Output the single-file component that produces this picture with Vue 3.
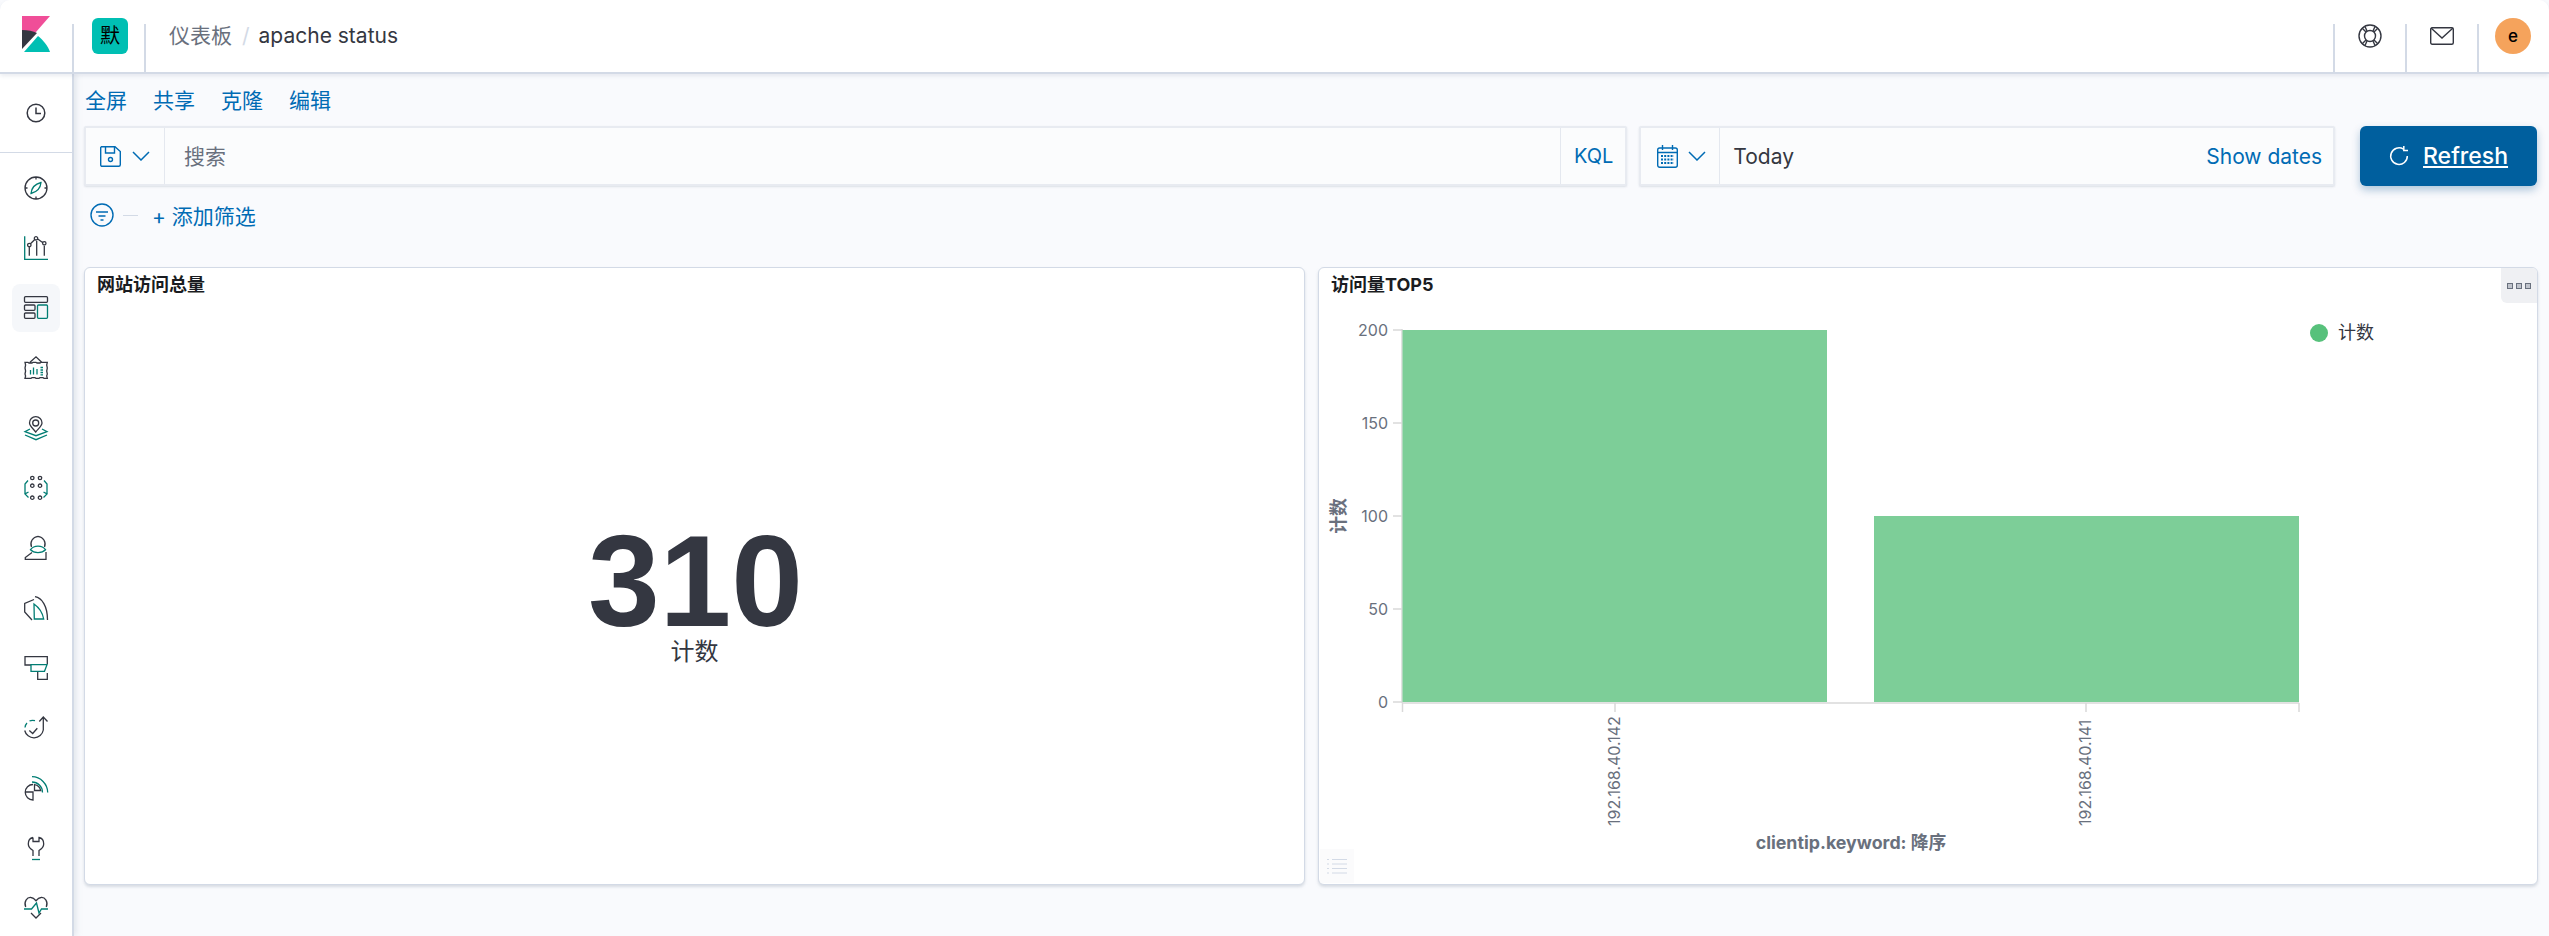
<template>
  <div class="app">
    <header class="top">
      <div class="logo-cell">
        <svg width="28" height="36" viewBox="0 0 28 36">
          <path d="M0 0H28L0 32Z" fill="#f04e98" />
          <path d="M0 14C6 14 11 15 15 17L0 33Z" fill="#343741" />
          <path d="M2 36L16 20C21 24 26 30 28 36Z" fill="#00bfb3" />
        </svg>
      </div>
      <div class="space-cell"><span class="space">默</span></div>
      <nav class="crumbs">
        <span class="crumb-link">仪表板</span>
        <span class="crumb-sep">/</span>
        <span class="crumb-now">apache status</span>
      </nav>
      <div class="top-icon">
        <svg width="24" height="24" viewBox="0 0 24 24" fill="none" stroke="#343741" stroke-width="1.4">
          <circle cx="12" cy="12" r="11" />
          <circle cx="12" cy="12" r="5.5" />
          <path d="M4 4L8 8M20 4L16 8M4 20L8 16M20 20L16 16M7 2.5L9 7M17 2.5L15 7M7 21.5L9 17M17 21.5L15 17" />
        </svg>
      </div>
      <div class="top-icon">
        <svg class="mail" width="24" height="18" viewBox="0 0 24 18" fill="none" stroke="#343741" stroke-width="1.4">
          <rect x="0.7" y="0.7" width="22.6" height="16.6" rx="1.5" />
          <path d="M1 1L12 11L23 1" />
        </svg>
      </div>
      <div class="top-avatar"><span class="avatar">e</span></div>
    </header>

    <div class="body">
      <aside class="side">
        <div class="side-recent">
          <svg width="20" height="20" viewBox="0 0 20 20" fill="none" stroke="#343741" stroke-width="1.5">
            <circle cx="10" cy="10" r="8.8" />
            <path d="M10 4.5V10.5H15" />
          </svg>
        </div>
        <div class="side-list">
          <div v-for="item in navItems" :key="item.name" class="side-item" :class="{ active: item.name === 'dashboard' }">
            <svg width="24" height="24" viewBox="0 0 24 24" fill="none" stroke-width="1.3">
              <path :d="item.dark" stroke="#343741" />
              <path :d="item.teal" stroke="#017d73" />
            </svg>
          </div>
        </div>
      </aside>

      <main class="content">
        <div class="actions">
          <a>全屏</a>
          <a>共享</a>
          <a>克隆</a>
          <a>编辑</a>
        </div>

        <div class="query">
          <div class="field field-search">
            <div class="prepend">
              <svg width="21" height="21" viewBox="0 0 21 21" fill="none" stroke="#006bb4" stroke-width="1.4">
                <path d="M1.5 0.7H15L20.3 5.5V18.8C20.3 19.7 19.7 20.3 18.8 20.3H2.2C1.3 20.3 0.7 19.7 0.7 18.8V1.5Z" />
                <path d="M5.5 1V7H14.5V1" />
                <circle cx="10.5" cy="13.5" r="2" />
              </svg>
              <svg width="18" height="10" viewBox="0 0 18 10" fill="none" stroke="#006bb4" stroke-width="1.5">
                <path d="M1 1L9 9L17 1" />
              </svg>
            </div>
            <div class="search-text">搜索</div>
            <a class="kql">KQL</a>
          </div>

          <div class="field field-date">
            <div class="prepend prepend-date">
              <svg width="21" height="23" viewBox="0 0 21 23" fill="none" stroke="#006bb4" stroke-width="1.4">
                <rect x="0.7" y="3" width="19.6" height="19.3" rx="2" />
                <path d="M1 7.5H20M5.5 0V5M15.5 0V5" />
                <path d="M4 11H17M4 14.5H17M4 18H17" stroke-width="2" stroke-dasharray="2 1.2" />
              </svg>
              <svg width="18" height="10" viewBox="0 0 18 10" fill="none" stroke="#006bb4" stroke-width="1.5">
                <path d="M1 1L9 9L17 1" />
              </svg>
            </div>
            <div class="date-text">Today</div>
            <a class="show-dates">Show dates</a>
          </div>

          <button class="refresh">
            <svg width="20" height="20" viewBox="0 0 20 20" fill="none" stroke="#fff" stroke-width="1.5">
              <path d="M14.5 3.2A8.3 8.3 0 1 0 18.3 10" />
              <path d="M14.8 0V4.4H19" />
            </svg>
            <span>Refresh</span>
          </button>
        </div>

        <div class="filters">
          <svg width="24" height="24" viewBox="0 0 24 24" fill="none" stroke="#006bb4" stroke-width="1.4">
            <circle cx="12" cy="12" r="11" />
            <path d="M6 9H18M8.5 13H15.5M10.5 17H13.5" />
          </svg>
          <span class="filter-dash"></span>
          <a class="add-filter"><span class="plus">+</span> 添加筛选</a>
        </div>

        <div class="panels">
          <section class="panel">
            <h3 class="panel-title">网站访问总量</h3>
            <div class="metric">
              <div class="metric-value">310</div>
              <div class="metric-label">计数</div>
            </div>
          </section>

          <section class="panel">
            <h3 class="panel-title">访问量TOP5</h3>
            <div class="panel-menu">
              <i></i><i></i><i></i>
            </div>
            <svg class="chart" width="1218" height="616" viewBox="0 0 1218 616">
              <g class="grid">
                <path v-for="t in yTicks" :key="t.label" :d="`M74 ${t.y}H83`" />
                <path d="M83 61V435" />
                <path d="M83 435H980" />
                <path v-for="x in xTicks" :key="x" :d="`M${x} 435V444`" />
              </g>
              <rect x="83.5" y="62" width="424.5" height="372" fill="#7dce98" />
              <rect x="555" y="248" width="425" height="186" fill="#7dce98" />
              <text v-for="t in yTicks" :key="t.label" class="tick" x="69" :y="t.y + 6" text-anchor="end">{{ t.label }}</text>
              <text class="tick" transform="translate(301 558) rotate(-90)">192.168.40.142</text>
              <text class="tick" transform="translate(772 558) rotate(-90)">192.168.40.141</text>
              <text class="axis-title" transform="translate(26 248) rotate(-90)" text-anchor="middle">计数</text>
              <text class="axis-title" x="532" y="581" text-anchor="middle">clientip.keyword: 降序</text>
              <circle cx="1000" cy="65" r="9" fill="#57c17b" />
              <text class="legend" x="1019" y="71">计数</text>
            </svg>
            <div class="legend-toggle">
              <svg width="20" height="16" viewBox="0 0 20 16" fill="none" stroke="#d3dae6" stroke-width="1">
                <path d="M0 1.5H2M5 1.5H20M0 6H2M5 6H20M0 10.5H2M5 10.5H20M0 15H2M5 15H20" />
              </svg>
            </div>
          </section>
        </div>
      </main>
    </div>
  </div>
</template>

<script setup>
const dot = (x, y, r = 1.7) => `M${x} ${y - r}A${r} ${r} 0 1 0 ${x} ${y + r}A${r} ${r} 0 1 0 ${x} ${y - r}Z`;

const navItems = [
  {
    name: 'discover',
    dark: 'M12 1A11 11 0 0 1 23 12A11 11 0 0 1 12 23A11 11 0 0 1 1 12A11 11 0 0 1 12 1ZM12 1V3.5M12 20.5V23M1 12H3.5M20.5 12H23',
    teal: 'M17 6.5C16.5 12 13 16 7 17.5C7.5 12 11 8 17 6.5Z',
  },
  {
    name: 'visualize',
    dark: `${dot(5.3, 9)}${dot(12, 2.3)}${dot(20.3, 7.3)}M6.5 7.8L10.8 3.5M13.7 3L18.6 6.6M5.3 11.3V19.7M12.7 5V19.7M20.3 10V19.7`,
    teal: 'M0.7 0.3V23.3H24',
  },
  {
    name: 'dashboard',
    dark: 'M1.5 0.7H22.5A1 1 0 0 1 23.5 1.7V5.3A1 1 0 0 1 22.5 6.3H1.5A1 1 0 0 1 0.5 5.3V1.7A1 1 0 0 1 1.5 0.7ZM1.5 9H10A1 1 0 0 1 11 10V13.3A1 1 0 0 1 10 14.3H1.5A1 1 0 0 1 0.5 13.3V10A1 1 0 0 1 1.5 9ZM1.5 17H10A1 1 0 0 1 11 18V21.3A1 1 0 0 1 10 22.3H1.5A1 1 0 0 1 0.5 21.3V18A1 1 0 0 1 1.5 17Z',
    teal: 'M14.5 9H22.5A1 1 0 0 1 23.5 10V21.3A1 1 0 0 1 22.5 22.3H14.5A1 1 0 0 1 13.5 21.3V10A1 1 0 0 1 14.5 9Z',
  },
  {
    name: 'canvas',
    dark: 'M6 6.3L12 0.8L17.7 6.3M1 6.3H4L5 7H8L9 6.3H12L13 7H16L17 6.3H23.3L22.7 9L23.3 12L22.7 15L23.3 18L22.7 20L23.3 22.3H20L19 21.7H16L15 22.3H12L11 21.7H8L7 22.3H1L1.6 20L1 18L1.6 15L1 12L1.6 9Z',
    teal: 'M6.5 14V18.5M9.5 11.5V18.5M13 13V18.5M16.5 11.5H19M16.5 14H19M16.5 16.5H19M16.5 18.8H19',
  },
  {
    name: 'maps',
    dark: 'M11.7 0.7A6.2 6.2 0 0 0 5.5 7C5.5 10 9 12.5 11.7 16C14.5 12.5 18 10 18 7A6.2 6.2 0 0 0 11.7 0.7ZM11.7 4A3 3 0 1 0 11.7 10A3 3 0 1 0 11.7 4Z',
    teal: 'M6 13L1 15.7L12 19.7L23 15.7L18 13M1 19L12 23.7L23 19',
  },
  {
    name: 'ml',
    dark: `${dot(8.3, 2)}${dot(16, 2)}${dot(8.3, 9.7)}${dot(16, 9.7)}${dot(8.3, 21.7)}${dot(16, 21.7)}`,
    teal: 'M4 4.5L1 8V18M4.5 16L1 18L4.5 21.5M20 4.5L23 8V18M19.5 16L23 18L19.5 21.5',
  },
  {
    name: 'infra',
    dark: 'M7.5 11A7.8 7.8 0 0 1 14 0.3A7.8 7.8 0 0 1 20.5 11M22 16V23.3H1.3V21.5L8 16.5',
    teal: 'M6.5 13.7C10 9 18 9 21.5 13.7C18 17.5 10 17.5 6.5 13.7Z',
  },
  {
    name: 'logs',
    dark: 'M11 0.7C18 2 23.5 10 23.5 24M10 3.5L0.7 7.5V16L8 24',
    teal: 'M10 8C15 11.5 18.5 16.5 19.7 23H10.3Z',
  },
  {
    name: 'apm',
    dark: 'M7 9H1V0.7H23.3V8M13.7 16V23.3H23.3V17',
    teal: 'M7 8.7H23L20.5 15.3H7Z',
  },
  {
    name: 'uptime',
    dark: 'M19.3 1V14A9.5 9.5 0 0 1 0.7 14.5M15.3 5.5L19.3 1L23.5 5.5M5.3 14.5L8.7 17.5L13.3 12.3',
    teal: 'M1 11.5C1.3 9.5 2 8 3 7M5.5 5C7 4.3 9 4.2 11 4.7',
  },
  {
    name: 'siem',
    dark: 'M9 8.5A7.7 7.7 0 1 0 9 24V16H1.3M10.5 8.7A7.7 7.7 0 0 1 16.7 14.5H10.5Z',
    teal: 'M8 0.7A16 16 0 0 1 23.7 16.5M8 6A10.5 10.5 0 0 1 18.5 16.5',
  },
  {
    name: 'devtools',
    dark: 'M9 1.5C6 2 4.3 5 4.3 8C4.3 11 6.5 13 9 14.5V20M15 20V14.5C17.5 13 19.7 11 19.7 8C19.7 5 18 2 15 1.5V5.5H9V1.5',
    teal: 'M8 23.5H16',
  },
  {
    name: 'monitoring',
    dark: 'M1.7 11C-0.5 6 3 1 7 1.5C9 1.7 10.5 3 12 4.7C13.5 3 15 1.7 17 1.5C21 1 24.5 6 22.3 11M7 17L12 22L17 17',
    teal: 'M0 13H7.5L10 10L12.5 7L15 17L17.5 13H24',
  },
];

const yTicks = [
  { label: '200', y: 62 },
  { label: '150', y: 155 },
  { label: '100', y: 248 },
  { label: '50', y: 341 },
  { label: '0', y: 434 },
];

const xTicks = [83.5, 296, 767, 980];
</script>

<style>
html,
body {
  margin: 0;
  padding: 0;
  background: #fff;
  overflow: hidden;
}
</style>

<style scoped>
.app {
  width: 2549px;
  height: 936px;
  display: flex;
  flex-direction: column;
  overflow: hidden;
  font-family: Inter, "Noto Sans CJK SC", sans-serif;
  font-size: 21px;
  color: #343741;
  background: #f9fafd;
}

a {
  color: #006bb4;
}

.top {
  flex: none;
  height: 72px;
  display: flex;
  align-items: stretch;
  background: #fff;
  border-bottom: 2px solid #d3dae6;
  box-shadow: 0 2px 4px rgba(152, 162, 179, 0.2);
  border-top-left-radius: 10px;
  border-top-right-radius: 10px;
  position: relative;
  z-index: 2;
}

.logo-cell {
  width: 72px;
  padding: 16px 0 0 22px;
  box-sizing: border-box;
}

.space-cell {
  width: 72px;
  box-sizing: border-box;
  border-left: 2px solid #d3dae6;
  margin-top: 24px;
  position: relative;
}

.space {
  position: absolute;
  top: -6px;
  left: 18px;
  width: 36px;
  height: 36px;
  border-radius: 6px;
  background: #00bfb3;
  color: #000;
  font-size: 20px;
  line-height: 36px;
  text-align: center;
}

.crumbs {
  flex: 1;
  display: flex;
  align-items: flex-start;
  margin-top: 24px;
  padding-left: 23px;
  border-left: 2px solid #d3dae6;
  line-height: 24px;
}

.crumb-link {
  color: #69707d;
}

.crumb-sep {
  margin: 0 9px 0 10px;
  color: #d3dae6;
}

.top-icon,
.top-avatar {
  width: 72px;
  box-sizing: border-box;
  border-left: 2px solid #d3dae6;
  margin-top: 24px;
  height: 48px;
  display: flex;
  justify-content: center;
  align-items: flex-start;
}

.mail {
  margin-top: 3px;
}

.top-avatar {
  position: relative;
}

.avatar {
  position: absolute;
  top: -6px;
  left: 16px;
  width: 36px;
  height: 36px;
  border-radius: 50%;
  background: #f5a35c;
  color: #000;
  font-size: 17px;
  font-weight: 500;
  line-height: 36px;
  text-align: center;
}

.body {
  flex: 1;
  display: flex;
  min-height: 0;
}

.side {
  flex: none;
  width: 72px;
  background: #fff;
  border-right: 2px solid #d3dae6;
  box-shadow: 2px 0 6px rgba(152, 162, 179, 0.25);
  position: relative;
  z-index: 1;
}

.side-recent {
  height: 78px;
  display: flex;
  align-items: center;
  justify-content: center;
  border-bottom: 1px solid #d3dae6;
}

.side-list {
  display: flex;
  flex-direction: column;
  align-items: center;
  padding-top: 11px;
}

.side-item {
  flex: none;
  width: 48px;
  height: 48px;
  margin-bottom: 12px;
  border-radius: 8px;
  display: flex;
  align-items: center;
  justify-content: center;
}

.side-item svg {
  overflow: visible;
}

.side-item.active {
  background: #f5f7fa;
}

.content {
  flex: 1;
  min-width: 0;
  padding: 0 12px 0 10px;
  display: flex;
  flex-direction: column;
}

.actions {
  height: 50px;
  padding: 0 0 2px 1px;
  display: flex;
  align-items: center;
  gap: 26px;
}

.query {
  display: flex;
  height: 60px;
}

.field {
  display: flex;
  align-items: center;
  box-sizing: border-box;
  height: 60px;
  background: #fbfcfd;
  border: 2px solid #e8ebf1;
  box-shadow: 0 1px 2px rgba(152, 162, 179, 0.3);
  border-radius: 2px;
}

.field-search {
  width: 1544px;
}

.field-date {
  width: 696px;
  margin-left: 12px;
}

.prepend {
  width: 79px;
  height: 100%;
  flex: none;
  display: flex;
  align-items: center;
  gap: 11px;
  padding-left: 14px;
  box-sizing: border-box;
  border-right: 1px solid #e4e8ef;
}

.prepend-date {
  padding-left: 16px;
  gap: 10px;
}

.search-text {
  flex: 1;
  padding: 0 0 2px 19px;
  color: #69707d;
}

.kql {
  height: 100%;
  display: flex;
  align-items: center;
  padding: 0 12px 0 13px;
  border-left: 1px solid #e4e8ef;
  font-size: 20px;
}

.date-text {
  flex: 1;
  padding-left: 13px;
}

.show-dates {
  padding-right: 11px;
}

.refresh {
  width: 177px;
  height: 60px;
  margin-left: 25px;
  display: flex;
  align-items: center;
  justify-content: center;
  gap: 14px;
  border: 0;
  border-radius: 6px;
  background: #005f9e;
  color: #fff;
  font-family: inherit;
  font-size: 23px;
  font-weight: 500;
  text-decoration: underline;
  box-shadow: 0 4px 8px rgba(0, 80, 140, 0.3);
}

.filters {
  height: 58px;
  display: flex;
  align-items: center;
  padding-left: 6px;
}

.filter-dash {
  width: 15px;
  height: 1px;
  margin: 0 14px 0 9px;
  background: #d3dae6;
}

.add-filter {
  margin-top: -1px;
}

.panels {
  margin-top: 23px;
  display: grid;
  grid-template-columns: 1221px 1220px;
  gap: 13px;
}

.panel {
  position: relative;
  box-sizing: border-box;
  height: 618px;
  background: #fff;
  border: 1px solid #d3dae6;
  border-radius: 6px;
  box-shadow: 0 2px 3px rgba(152, 162, 179, 0.35);
  overflow: hidden;
}

.panel-title {
  position: absolute;
  top: 5px;
  left: 12px;
  margin: 0;
  font-size: 18px;
  font-weight: 700;
  line-height: 24px;
  color: #1a1c21;
}

.panel-menu {
  position: absolute;
  top: 0;
  right: 0;
  width: 36px;
  height: 35px;
  display: flex;
  align-items: center;
  justify-content: center;
  gap: 3px;
  background: #eff0f3;
  border-bottom-left-radius: 6px;
}

.panel-menu i {
  width: 4px;
  height: 4px;
  border: 1px solid #69707d;
  background: #c0c4cc;
}

.metric {
  height: 100%;
  display: flex;
  flex-direction: column;
  align-items: center;
  padding-top: 258px;
  box-sizing: border-box;
}

.metric-value {
  font-family: "Liberation Sans", sans-serif;
  font-size: 129px;
  font-weight: 700;
  line-height: 110px;
  margin-left: 2px;
}

.metric-label {
  font-size: 24px;
  line-height: 32px;
}

.chart {
  display: block;
}

.grid path {
  fill: none;
  stroke: #d9d9d9;
  stroke-width: 1.5;
}

.tick {
  font-size: 16px;
  fill: #69707d;
}

.axis-title {
  font-size: 17.8px;
  font-weight: 700;
  fill: #69707d;
}

.legend {
  font-size: 18px;
  fill: #343741;
}

.legend-toggle {
  position: absolute;
  left: 1px;
  bottom: 1px;
  width: 34px;
  height: 34px;
  display: flex;
  align-items: center;
  justify-content: center;
  background: #fbfbfc;
}
</style>
